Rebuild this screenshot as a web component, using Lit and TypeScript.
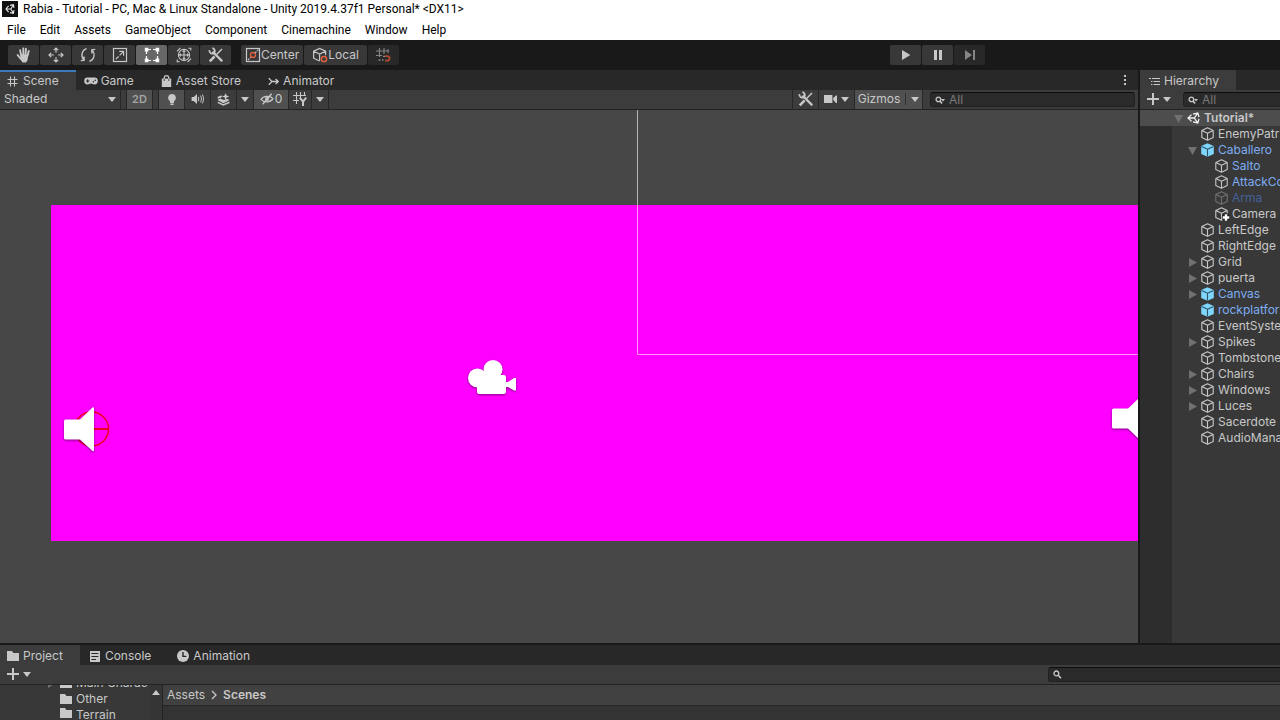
import { LitElement, html, css, svg, nothing } from "lit";
import { customElement, state } from "lit/decorators.js";
import { classMap } from "lit/directives/class-map.js";

const caret = html`<svg class="caret" width="8" height="5" viewBox="0 0 8 5" aria-hidden="true"><path d="M0 0h8L4 5z" fill="currentColor"/></svg>`;

const icon = (body: unknown, w = 16, h = 16) =>
  html`<svg width=${w} height=${h} viewBox="0 0 ${w} ${h}" fill="none" stroke="currentColor" aria-hidden="true">${body}</svg>`;

const wrenchBody = svg`
  <path d="M8.6 7.4l5.4-5.4" stroke-width="1.4"/>
  <path d="M1.8 14.4l4.8-5" stroke-width="2.6"/>
  <path d="M5.2 5.2l8.4 8.4" stroke-width="2.3" stroke-linecap="round"/>
  <path d="M1.4 3.2a3 3 0 0 0 4.8 2.8a3 3 0 0 0-1.8-4.8" stroke-width="1.8"/>`;

const icons = {
  unity: icon(svg`<rect width="16" height="16" fill="#111" stroke="none"/>
    <path d="M6.6 4.8L4 8l2.6 3.2M8 4.4l3.4-.8.6 3.2M8 11.6l3.4.8.6-3.2M4 8h4.8M8.8 8l2.4-3.8M8.8 8l2.4 3.8" stroke="#e8e8e8" stroke-width="1.1"/>`),
  scene: icon(svg`<path d="M4.6 2.6L1 6l3.6 3.4M6 2.2L10.8 1l1.2 4M6 9.8l4.8 1.2 1.2-4M1 6h6.4M7.4 6l3.2-4.8M7.4 6l3.2 4.8" stroke="#f0f0f0" stroke-width="1.3"/>`, 13, 12),
  hand: icon(svg`<g stroke-width="1.9" stroke-linecap="round"><path d="M5.2 8.6L4.1 3.2M7.3 8V1.4M9.5 8l.5-6.2M11.4 9l1.4-5M4.6 11.6L1.6 8"/></g>
    <path d="M4.4 7.4h7.9l-.7 5.4c-.4 2-1.5 2.8-3.4 2.8-1.6 0-2.6-.7-3.6-2.8z" fill="currentColor" stroke="none"/>`),
  move: icon(svg`<path d="M8 1v4.8M8 10.2V15M1 8h4.8M10.2 8H15M5.8 3.2L8 1l2.2 2.2M5.8 12.8L8 15l2.2-2.2M3.2 5.8L1 8l2.2 2.2M12.8 5.8L15 8l-2.2 2.2" stroke-width="1.2"/>`),
  rotate: icon(svg`<path d="M6.6 1.6C2 3 .4 8.6 3.6 12.6M.8 13.6l3.4-.4-.1-3.6M9.4 14.4C14 13 15.6 7.4 12.4 3.4M15.2 2.4l-3.4.4.1 3.6" stroke-width="1.3"/>`),
  scale: icon(svg`<rect x="1.5" y="1.5" width="13" height="13" stroke-width="1.2"/><path d="M4 12l2.6-2.6M7.2 4.4h4.4v4.4M11.4 4.6L7.6 8.4" stroke-width="1.2"/>`),
  rect: icon(svg`<path d="M4 2.5h8M4 13.5h8M2.5 4v8M13.5 4v8" stroke-width="1.2" stroke-dasharray="3 2"/>
    <path d="M.8.8h3.6v3.6H.8zM11.6.8h3.6v3.6h-3.6zM.8 11.6h3.6v3.6H.8zM11.6 11.6h3.6v3.6h-3.6z" fill="currentColor" stroke="none"/>`),
  transform: icon(svg`<circle cx="8" cy="8" r="5.6" stroke-width="1.1"/><path d="M8 3.6v8.8M3.6 8h8.8M6.7 4.9L8 3.6l1.3 1.3M6.7 11.1L8 12.4l1.3-1.3M4.9 6.7L3.6 8l1.3 1.3M11.1 6.7L12.4 8l-1.3 1.3M1 4.4L4.4 1M12.4 1.2h2.4v2.4M1.2 12.4v2.4h2.4M11.6 15l3.4-3.4" stroke-width="1.1"/>`),
  tools: icon(wrenchBody),
  center: icon(svg`<rect x="1.5" y="1.5" width="13" height="13" stroke-width="1.2"/><path d="M3 13l3-3M10 6l3.4-3.4" stroke-width="1.2" stroke-dasharray="2 1"/><circle cx="8" cy="8" r="2.5" stroke="#e2603d" stroke-width="1.4"/>`),
  local: icon(svg`<path d="M7.5 14L1.6 11.2V4.2L7.6 1.4l6 2.8v4M1.6 4.2l6 2.8 6-2.8M7.6 7v6.6" stroke-width="1.2"/><circle cx="12" cy="12" r="2.6" stroke="#e2603d" stroke-width="1.5"/>`),
  snap: icon(svg`<path d="M4.5 1v9M9 1v6M13 2v4M1 4h13M1 8.5h6" stroke-width="1.1"/><path d="M3.5 13h2M7 13h1.6M8 9.4h2" stroke-width="1.4"/><path d="M10 9.2h2.3a2.2 2.2 0 0 1 0 4.4H10" stroke="#b04a2e" stroke-width="1.8"/>`),
  play: icon(svg`<path d="M4 3l8.4 5L4 13z" fill="currentColor" stroke="none"/>`),
  pause: icon(svg`<path d="M4 3h3v10H4zM9 3h3v10H9z" fill="currentColor" stroke="none"/>`),
  step: icon(svg`<path d="M3 3l7 5-7 5zM11 3h2v10h-2z" fill="currentColor" stroke="none"/>`),
  grid: icon(svg`<path d="M3.5.5v10M7.5.5v10M.5 3.5h10M.5 7.5h10" stroke-width="1.1"/>`, 11, 11),
  game: icon(svg`<path d="M3.6 1.6h6.8a3.4 3.4 0 0 1 0 6.8c-1.4 0-2-1-3.4-1s-2 1-3.4 1a3.4 3.4 0 0 1 0-6.8z" fill="currentColor" stroke="none"/><path d="M2 5h3.4M3.7 3.3v3.4" stroke="#282828" stroke-width="1.1"/><circle cx="9.4" cy="5.8" r=".8" fill="#282828" stroke="none"/><circle cx="11.2" cy="4.2" r=".8" fill="#282828" stroke="none"/>`, 14, 10),
  store: icon(svg`<path d="M.8 3.6h9.4V12H.8z" fill="currentColor" stroke="none"/><path d="M3.2 5.6V3a2.3 2.3 0 0 1 4.6 0v2.6" stroke-width="1.2"/><path d="M3.2 4.2v1.6M7.8 4.2v1.6" stroke="#282828"/>`, 11, 12),
  animator: icon(svg`<path d="M.8 1.2L4 4.5.8 7.8M4 4.5h6M7.6 2l2.6 2.5L7.6 7" stroke-width="1.3"/>`, 11, 9),
  bulb: icon(svg`<path d="M6 1a3.9 3.9 0 0 0-2 7.2V10h4V8.2A3.9 3.9 0 0 0 6 1zM4.4 10.6h3.2V12H4.4z" fill="currentColor" stroke="none"/>`, 12, 12),
  audio: icon(svg`<path d="M.6 4h2.2L6 1v10L2.8 8H.6z" fill="currentColor" stroke="none"/><path d="M7.6 3.8v4.4M9.6 2.6c1 1.8 1 5 0 6.8M11.4 1.6c1.4 2.6 1.4 6.2 0 8.8" stroke-width="1"/>`, 13, 12),
  effects: icon(svg`<path d="M.4 7l3-1.4 3.4 1.4 3.2-1.2 2.6 1.2-6.2 3.2z" fill="currentColor" stroke="none"/><path d="M.8 9.4l5.6 2.6 6-2.8" stroke-width="1.5"/><path d="M8.6 0l1 2.4 2.8 1-2.8 1-1 2.6-1-2.6-2.6-1 2.6-1z" fill="currentColor" stroke="none"/><path d="M.8 4.8l4-1.6" stroke-width="1.8"/>`, 13, 13),
  hidden: icon(svg`<path d="M1 6.4C3.2 2.8 10 2.2 13 5.6c-2.4 4-9 4.4-12 .8z" stroke-width="1.2"/><circle cx="7" cy="6" r="1.9" fill="currentColor" stroke="none"/><path d="M2.6 11.4L11.6.8" stroke-width="1.4"/>`, 14, 12),
  gridY: icon(svg`<path d="M3.5 0v12M7.5 0v6M11.5 0v4M0 3.5h13M0 8.5h6" stroke-width="1.1"/><path d="M6.8 5.6l3.2 4 3.2-4M10 9.2V14" stroke-width="2"/>`, 14, 14),
  camera: icon(svg`<path d="M0 1h8.4v8H0zM9.2 4L12 1.4h1V9h-1L9.2 6z" fill="currentColor" stroke="none"/>`, 13, 10),
  search: icon(svg`<circle cx="3.4" cy="3.4" r="2.4" stroke-width="1.3"/><path d="M5.2 5.2L8 8.2" stroke-width="1.6"/>`, 9, 9),
  searchMenu: icon(svg`<circle cx="3.4" cy="3.4" r="2.3" stroke-width="1.3"/><path d="M5 5l2 2.4" stroke-width="1.6"/><path d="M6 3h4L8 5.4z" fill="currentColor" stroke="none"/>`, 10, 8),
  kebab: icon(svg`<path d="M1 0h2v2H1zM1 4h2v2H1zM1 8h2v2H1z" fill="currentColor" stroke="none"/>`, 4, 10),
  list: icon(svg`<path d="M0 1.5h2M3 1.5h8M2 4.5h1.4M4.6 4.5H11M2 7.5h1.4M4.6 7.5H11" stroke-width="1.1"/>`, 11, 9),
  plus: icon(svg`<path d="M6 0v12M0 6h12" stroke-width="2"/>`, 12, 12),
  folder: icon(svg`<path d="M0 1h5l1.4 2H12v8H0z" fill="currentColor" stroke="none"/>`, 12, 12),
  console: icon(svg`<path d="M0 0h10v11H0z" fill="currentColor" stroke="none"/><path d="M1.4 2.5h7M1.4 5.5h7M1.4 8.5h4.6" stroke="#282828" stroke-width="1"/>`, 10, 11),
  clock: icon(svg`<circle cx="6" cy="6" r="6" fill="currentColor" stroke="none"/><path d="M6 2v4.4h3.4" stroke="#282828" stroke-width="1.4"/>`, 12, 12),
  cube: icon(svg`<path d="M6.5.8l5.7 2.6v7L6.5 13.2.8 10.4v-7zM.8 3.4l5.7 2.8 5.7-2.8M6.5 6.2v7" stroke-width="1.1" stroke-linejoin="round"/>`, 13, 14),
  prefab: icon(svg`<path d="M6.5.2l6.3 2.9v7.8L6.5 13.8.2 10.9V3.1z" fill="#7fd6fd" stroke="none"/><path d="M.6 3.5l5.9 2.7 5.9-2.7M6.5 6.2v7.4" stroke="#2f4f63" stroke-width="1.1"/>`, 13, 14),
  cubeAdded: icon(svg`<path d="M6.5.8l5.7 2.6v7L6.5 13.2.8 10.4v-7zM.8 3.4l5.7 2.8 5.7-2.8M6.5 6.2v7" stroke-width="1.1" stroke-linejoin="round"/><circle cx="11" cy="10.5" r="4.2" fill="#222" stroke="none"/><path d="M11 7.2v6.6M7.7 10.5h6.6" stroke="#fff" stroke-width="2.4"/>`, 15, 14),
  chevron: icon(svg`<path d="M1 1l4 4-4 4" stroke-width="1.3"/>`, 6, 10),
};

type Node = { name: string; depth: number; fold?: "open" | "closed"; kind?: "scene" | "prefab" | "added"; tone?: "blue" | "off" };

const nodes: Node[] = [
  { name: "Tutorial*", depth: 0, fold: "open", kind: "scene" },
  { name: "EnemyPatr", depth: 1 },
  { name: "Caballero", depth: 1, fold: "open", kind: "prefab", tone: "blue" },
  { name: "Salto", depth: 2, tone: "blue" },
  { name: "AttackCo", depth: 2, tone: "blue" },
  { name: "Arma", depth: 2, tone: "off" },
  { name: "Camera", depth: 2, kind: "added" },
  { name: "LeftEdge", depth: 1 },
  { name: "RightEdge", depth: 1 },
  { name: "Grid", depth: 1, fold: "closed" },
  { name: "puerta", depth: 1, fold: "closed" },
  { name: "Canvas", depth: 1, fold: "closed", kind: "prefab", tone: "blue" },
  { name: "rockplatfor", depth: 1, kind: "prefab", tone: "blue" },
  { name: "EventSyste", depth: 1 },
  { name: "Spikes", depth: 1, fold: "closed" },
  { name: "Tombstone", depth: 1 },
  { name: "Chairs", depth: 1, fold: "closed" },
  { name: "Windows", depth: 1, fold: "closed" },
  { name: "Luces", depth: 1, fold: "closed" },
  { name: "Sacerdote", depth: 1 },
  { name: "AudioMana", depth: 1 },
];

const base = css`
  * { box-sizing: border-box; }
  button, input, select { font: inherit; color: inherit; border: 0; margin: 0; padding: 0; background: none; border-radius: 0; outline: none; }
  button { display: flex; align-items: center; justify-content: center; white-space: nowrap; }
  svg { display: block; flex: none; }
  .tabs { display: flex; height: 20px; background: #282828; }
  .tab { gap: 5px; padding: 2px 16px 0 7px; }
  .tab.active { background: #3c3c3c; }
  .bar { display: flex; align-items: stretch; height: 20px; background: #3c3c3c; border-bottom: 1px solid #232323; }
  .bar button { padding-bottom: 1px; }
  .bar .add { gap: 4px; padding: 0 7px 1px; }
  .search { display: flex; align-items: center; gap: 4px; height: 15px; padding: 0 4px; margin: 2px 3px 0 0; background: #2a2a2a; border: 1px solid #212121; border-top-color: #0d0d0d; border-radius: 3px; }
  .search input { flex: 1; min-width: 0; height: 13px; }
  .search input::placeholder { color: #7a7a7a; opacity: 1; }
`;

@customElement("editor-hierarchy")
class EditorHierarchy extends LitElement {
  static styles = [base, css`
    :host { display: flex; flex-direction: column; min-width: 0; overflow: hidden; background: #383838; }
    .tab { gap: 4px; padding: 2px 17px 0 9px; }
    .bar .search { flex: none; width: 220px; margin-left: 5px; }
    .tree { flex: 1; margin: 0; padding: 0; list-style: none; background: linear-gradient(to right, #2d2d2d 32px, #383838 32px); }
    .row { display: flex; align-items: center; gap: 4px; height: 16px; white-space: nowrap; padding-left: 48px; }
    .row.d0 { padding-left: 34px; background: #4d4d4d; font-weight: 600; }
    .row.d2 { padding-left: 62px; }
    .fold { flex: none; width: 9px; height: 9px; color: #707070; }
    .pic { flex: none; width: 13px; overflow: visible; }
    .blue { color: #7dadf3; }
    .blue .pic { color: #c4c4c4; }
    .off { color: #44619a; }
    .off .pic { color: #707070; }
  `];

  render() {
    return html`
      <div class="tabs"><button class="tab active">${icons.list}Hierarchy</button></div>
      <div class="bar">
        <button class="add" aria-label="Create">${icons.plus}${caret}</button>
        <label class="search">${icons.searchMenu}<input type="text" placeholder="All" aria-label="Search hierarchy"></label>
      </div>
      <ul class="tree">
        ${nodes.map((n) => {
          const pic = n.kind === "scene" ? icons.scene : n.kind === "prefab" ? icons.prefab : n.kind === "added" ? icons.cubeAdded : icons.cube;
          return html`<li class="row d${n.depth} ${n.tone ?? ""}">
            <span class="fold">${n.fold
              ? html`<svg width="9" height="9" viewBox="0 0 9 9"><path d=${n.fold === "open" ? "M0 1h9L4.5 9z" : "M1 0v9l8-4.5z"} fill="currentColor"/></svg>`
              : nothing}</span>
            <span class="pic">${pic}</span><span>${n.name}</span>
          </li>`;
        })}
      </ul>`;
  }
}

@customElement("editor-scene")
class EditorScene extends LitElement {
  static styles = [base, css`
    :host { display: flex; flex-direction: column; min-width: 0; overflow: hidden; }
    .tab.active { border-top: 2px solid #3a79bb; padding: 0 17px 0 7px; }
    .tab.game { padding-left: 8px; gap: 3px; }
    .tab.store { padding: 2px 13px 0 11px; gap: 4px; }
    .tab.anim { padding-left: 14px; gap: 4px; }
    .more { margin-left: auto; width: 26px; }
    .bar button, .shade { border-right: 1px solid #272727; }
    .bar .on { background: #505050; }
    .shade { display: flex; align-items: center; width: 121px; padding: 0 4px 1px; }
    .shade select { flex: 1; appearance: none; }
    .gap { width: 6px; border-right: 1px solid #272727; }
    .drop { width: 17px; }
    .one { width: 26px; }
    .slim { width: 23px; }
    .pair { width: 36px; gap: 4px; }
    .count { width: 35px; gap: 1px; }
    .grow { flex: 1; border-right: 1px solid #272727; }
    .two-d { font-size: 11px; font-weight: 600; color: #a4a4a4; }
    .gizmos { width: 68px; gap: 5px; }
    .split { width: 1px; height: 12px; background: #303030; }
    .bar .search { width: 205px; margin-left: 7px; }
    .view { display: block; flex: 1; min-height: 0; width: 100%; background: #474747; }
    .gizmo { filter: drop-shadow(0 1px 1px #400040aa); }
  `];

  render() {
    return html`
      <div class="tabs">
        <button class="tab active">${icons.grid}Scene</button>
        <button class="tab game">${icons.game}Game</button>
        <button class="tab store">${icons.store}Asset Store</button>
        <button class="tab anim">${icons.animator}Animator</button>
        <button class="more" aria-label="More">${icons.kebab}</button>
      </div>
      <div class="bar">
        <label class="shade"><select aria-label="Draw mode"><option>Shaded</option></select>${caret}</label>
        <span class="gap"></span>
        <button class="one on two-d">2D</button>
        <span class="gap"></span>
        <button class="one on" aria-label="Lighting">${icons.bulb}</button>
        <button class="one" aria-label="Audio">${icons.audio}</button>
        <button class="one" aria-label="Effects">${icons.effects}</button>
        <button class="drop" aria-label="Effects menu">${caret}</button>
        <button class="count on" aria-label="Hidden objects">${icons.hidden}<span>0</span></button>
        <button class="slim" aria-label="Grid axis">${icons.gridY}</button>
        <button class="drop" aria-label="Grid menu">${caret}</button>
        <span class="grow"></span>
        <button class="one" aria-label="Component tools">${icons.tools}</button>
        <button class="pair" aria-label="Scene camera">${icons.camera}${caret}</button>
        <button class="gizmos on"><span>Gizmos</span><span class="split"></span>${caret}</button>
        <label class="search">${icons.searchMenu}<input type="text" placeholder="All" aria-label="Search scene"></label>
      </div>
      <svg class="view" role="img" aria-label="Scene view">
        <rect x="51" y="95" width="100%" height="336" fill="#ff00ff"/>
        <path d="M637.5 0V244.5H4000" fill="none" stroke="#fff" stroke-opacity=".6"/>
        <circle cx="91.5" cy="319" r="17" fill="none" stroke="#f00020" stroke-width="1.5"/>
        <path d="M90 319h19" stroke="#f00020" stroke-width="2"/>
        <g class="gizmo" fill="#fff">
          <path d="M65.5 309.5H80L92.5 297.5q1.5-1 1.5 1V340q0 2-1.5 1L80 329.5H65.5q-1.5 0-1.5-1.5V311q0-1.5 1.5-1.5z"/>
          <path d="M1113.5 298.5H1128L1140.5 286.5V330.5L1128 318.5H1113.5q-1.5 0-1.5-1.5V300q0-1.5 1.5-1.5z"/>
          <circle cx="477.5" cy="268" r="9.5"/>
          <circle cx="493" cy="259.5" r="9.5"/>
          <path d="M481 265h23q2 0 2 2v5h2L514 268h2v12.5H514L508 277h-2v5q0 2-2 2h-25q-2 0-2-2v-9z"/>
        </g>
      </svg>`;
  }
}

@customElement("editor-project")
class EditorProject extends LitElement {
  static styles = [base, css`
    :host { display: flex; flex-direction: column; height: 77px; border-top: 2px solid #191919; overflow: hidden; background: #333; }
    .tab { gap: 4px; padding-right: 17px; }
    .tab.console { padding-left: 10px; padding-right: 18px; gap: 5px; }
    .tab.clock { padding-left: 8px; }
    .bar .search { width: 18%; min-width: 232px; margin: 2px 0 0 auto; border-top-right-radius: 0; border-bottom-right-radius: 0; border-right: 0; }
    .body { flex: 1; display: grid; grid-template-columns: 150px 13px minmax(0, 1fr); min-height: 0; }
    .folders { margin: 0; padding: 0 0 0 47px; list-style: none; background: #383838; height: 35px; overflow: hidden; display: flex; flex-direction: column; justify-content: flex-end; }
    .folders li { flex: none; display: flex; align-items: center; gap: 4px; height: 16px; padding-left: 13px; white-space: nowrap; }
    .folders li.open { padding-left: 0; }
    .folders .arrow { color: #707070; }
    .folders .last { height: 13px; align-items: flex-start; }
    .scroll { align-items: flex-start; padding-top: 5px; background: #353535; border-right: 1px solid #232323; }
    .crumbs { display: flex; align-items: center; gap: 6px; height: 21px; padding: 0 4px; background: #414141; border-bottom: 1px solid #262626; }
    .crumbs a { color: inherit; text-decoration: none; }
    .crumbs a.here { font-weight: 600; }
  `];

  render() {
    return html`
      <div class="tabs">
        <button class="tab active">${icons.folder}Project</button>
        <button class="tab console">${icons.console}Console</button>
        <button class="tab clock">${icons.clock}Animation</button>
      </div>
      <div class="bar">
        <button class="add" aria-label="Create">${icons.plus}${caret}</button>
        <label class="search">${icons.search}<input type="text" aria-label="Search project"></label>
      </div>
      <div class="body">
        <ul class="folders">
          <li class="open"><svg class="arrow" width="9" height="9" viewBox="0 0 9 9"><path d="M1 0v9l7-4.5z" fill="currentColor"/></svg>${icons.folder}<span>Main Charac</span></li>
          <li>${icons.folder}<span>Other</span></li>
          <li class="last">${icons.folder}<span>Terrain</span></li>
        </ul>
        <button class="scroll" aria-label="Scroll up"><svg width="8" height="5" viewBox="0 0 8 5"><path d="M0 5h8L4 0z" fill="currentColor"/></svg></button>
        <div>
          <nav class="crumbs" aria-label="Folder"><a href="#assets">Assets</a>${icons.chevron}<a class="here" href="#scenes">Scenes</a></nav>
        </div>
      </div>`;
  }
}

@customElement("app-root")
class AppRoot extends LitElement {
  @state() private tool = "rect";

  static styles = [base, css`
    :host { display: flex; flex-direction: column; height: 100vh; overflow: hidden; background: #191919; color: #c8c8c8; font: 12px/16px Inter, "Liberation Sans", sans-serif; }
    .title, .menu { display: flex; align-items: center; background: #fff; color: #000; font: 12px/16px Roboto, "Noto Sans", sans-serif; white-space: nowrap; }
    .title { gap: 5px; height: 18px; padding: 0 2px; }
    .menu { height: 22px; padding-top: 2px; }
    .menu button { padding: 0 7px; height: 20px; }
    .toolbar { display: flex; height: 30px; padding: 5px 9px 5px 8px; }
    .set { display: flex; gap: 1px; height: 20px; margin-right: 10px; }
    .set button { background: #383838; height: 20px; border-radius: 2px; }
    .set .sq { width: 31px; }
    .set .pivot { padding: 0 4px; }
    .set .space { padding: 0 8px; }
    .set .sel { background: #676767; color: #fff; }
    .set .dim { background: #282828; color: #858585; }
    .set.transport { margin: 0 286px 0 auto; }
    .main { flex: 1; min-height: 0; display: grid; grid-template-columns: minmax(0, 1fr) 140px; gap: 2px; }
  `];

  render() {
    const tools: [string, unknown][] = [
      ["hand", icons.hand], ["move", icons.move], ["rotate", icons.rotate], ["scale", icons.scale],
      ["rect", icons.rect], ["transform", icons.transform], ["custom", icons.tools],
    ];
    const menus = ["File", "Edit", "Assets", "GameObject", "Component", "Cinemachine", "Window", "Help"];
    return html`
      <header class="title">${icons.unity}<span>Rabia - Tutorial - PC, Mac &amp; Linux Standalone - Unity 2019.4.37f1 Personal* &lt;DX11&gt;</span></header>
      <nav class="menu">${menus.map((m) => html`<button>${m}</button>`)}</nav>
      <div class="toolbar">
        <div class="set">
          ${tools.map(([id, pic]) => html`<button class=${classMap({ sq: true, sel: this.tool === id })} aria-label=${id} @click=${() => (this.tool = id)}>${pic}</button>`)}
        </div>
        <div class="set">
          <button class="pivot">${icons.center}Center</button>
          <button class="space">${icons.local}Local</button>
          <button class="sq dim" aria-label="Snap">${icons.snap}</button>
        </div>
        <div class="set transport">
          <button class="sq" aria-label="Play">${icons.play}</button>
          <button class="sq" aria-label="Pause">${icons.pause}</button>
          <button class="sq dim" aria-label="Step">${icons.step}</button>
        </div>
      </div>
      <main class="main">
        <editor-scene></editor-scene>
        <editor-hierarchy></editor-hierarchy>
      </main>
      <editor-project></editor-project>`;
  }
}
